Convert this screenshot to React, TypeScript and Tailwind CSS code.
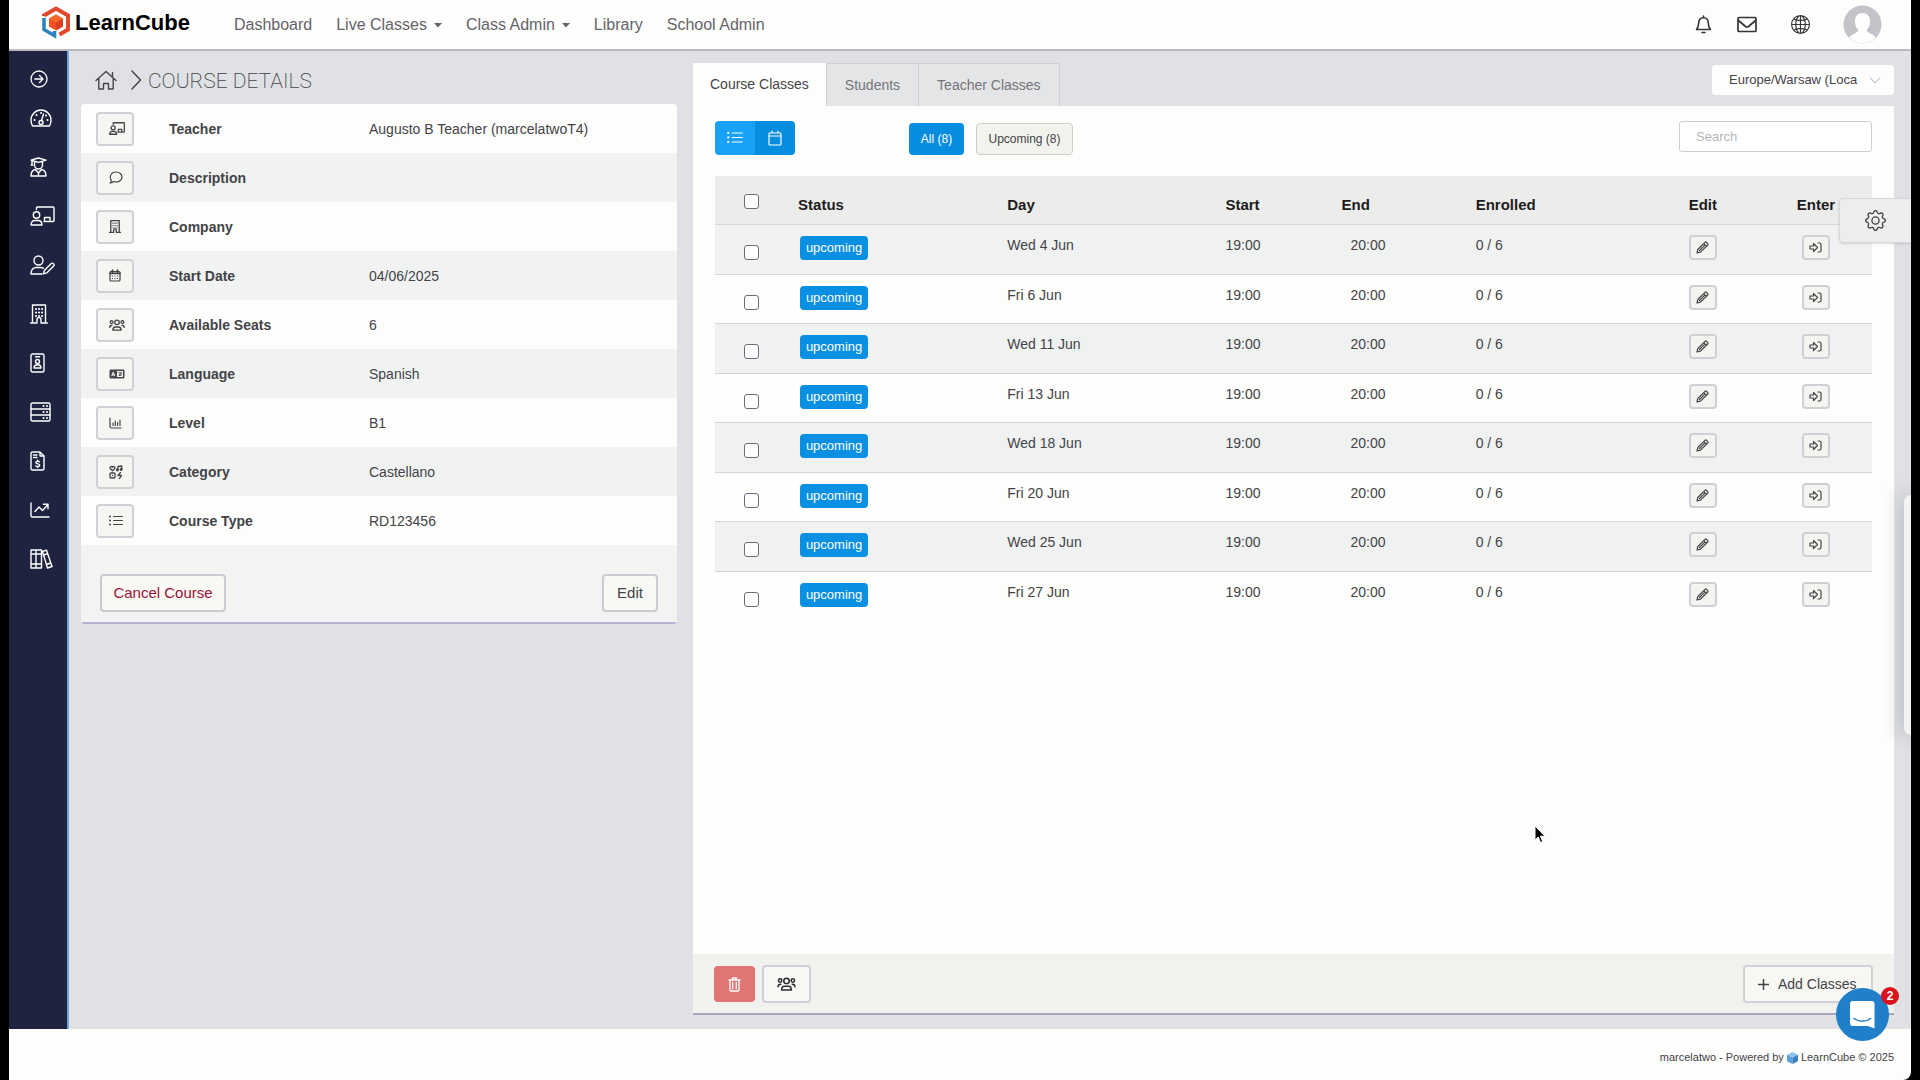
import React, { useState } from 'react';
import { FaLanguage } from 'react-icons/fa6';
import { BsGlobe2, BsListUl, BsGear } from 'react-icons/bs';

type IconProps = { w: number; h: number; box: string; children: React.ReactNode; stroke?: number };

const Icon: React.FC<IconProps> = ({ w, h, box, children, stroke = 1.4 }) => (
  <svg
    width={w}
    height={h}
    viewBox={box}
    fill="none"
    stroke="currentColor"
    strokeWidth={stroke}
    strokeLinecap="round"
    strokeLinejoin="round"
    aria-hidden="true"
  >
    {children}
  </svg>
);

// Shapes used both in the sidebar and in the small detail buttons
const boardShape = (
  <>
    <circle cx="6.5" cy="9" r="3.2" />
    <path d="M1 19c0-3 1.600-4.500 4-4.500h3c2.400 0 4 1.500 4 4.500z" />
    <path d="M6.500 3.500V2a1 1 0 0 1 1-1H23a1 1 0 0 1 1 1v12.500a1 1 0 0 1-1 1h-9M14.500 15v-3.500H20V15" />
  </>
);

const buildingShape = (
  <>
    <path d="M2.500 19V1h13v18M.700 19H7M11 19h6.300M7 19v-3.500a2 2 0 0 1 4 0V19" />
    <path strokeWidth="2" d="M6 5h.1M9 5h.1M12 5h.1M6 8.500h.1M9 8.500h.1M12 8.500h.1M6 12h.1M9 12h.1M12 12h.1" />
  </>
);

const TeamIcon: React.FC<{ w: number; h: number }> = ({ w, h }) => (
  <Icon w={w} h={h} box="0 0 20 15" stroke={1.6}>
    <circle cx="10" cy="4.200" r="2.900" />
    <circle cx="3.200" cy="3.700" r="1.800" />
    <circle cx="16.800" cy="3.700" r="1.800" />
    <path d="M4.800 14c0-2.600 1.200-4 3.200-4h4c2 0 3.200 1.400 3.200 4zM1 10.500c0-1.800.9-2.700 2.800-2.700M19 10.500c0-1.800-.9-2.700-2.800-2.700" />
  </Icon>
);

const sideItems = [
  {
    label: 'Overview',
    icon: (
      <Icon w={22} h={20} box="0 0 22 20">
        <path d="M2.500 18C1.500 16.200 1 14.200 1 12a10 10 0 0 1 20 0c0 2.200-.5 4.200-1.500 6z" />
        <circle cx="11" cy="14.500" r="2" />
        <path d="M11.500 12.500 13.500 6" />
        <path strokeWidth="1.900" d="M11 5h.1M6.500 7h.1M4.500 12h.1M17.500 12h.1M16 7.500h.1" />
      </Icon>
    ),
  },
  {
    label: 'Students',
    icon: (
      <Icon w={17} h={20} box="0 0 17 20">
        <path d="M1 3.200 8.500 1 16 3.200 8.500 5.400zM2 3.600V8M1.200 8h1.600M4.500 4.500V8a4 4 0 0 0 8 0V4.500" />
        <path d="M5.500 12.500C2.500 13 1 15 1 19h15c0-4-1.500-6-4.500-6.500L8.500 16zM8.500 16v3" />
      </Icon>
    ),
  },
  { label: 'Teachers', icon: <Icon w={25} h={20} box="0 0 25 20">{boardShape}</Icon> },
  {
    label: 'Edit users',
    icon: (
      <Icon w={25} h={20} box="0 0 25 20">
        <circle cx="8.500" cy="5.500" r="4.500" />
        <path d="M12 19H1c0-4.500 2.300-6.500 5.500-6.500h4c1 0 2 .3 2.800.7M13.500 18.800l.8-3.300 7-7a1.400 1.400 0 0 1 2 0l.4.400a1.400 1.400 0 0 1 0 2l-7 7z" />
      </Icon>
    ),
  },
  { label: 'Companies', icon: <Icon w={18} h={20} box="0 0 18 20">{buildingShape}</Icon> },
  {
    label: 'Badges',
    icon: (
      <Icon w={15} h={20} box="0 0 15 20">
        <rect x="1" y="1" width="13" height="18" rx="1.500" />
        <circle cx="7.500" cy="8.500" r="2" />
        <path d="M5.500 3.800h4M4 15c0-2.300 1-3.200 3.500-3.200S11 12.700 11 15z" />
      </Icon>
    ),
  },
  {
    label: 'Resources',
    icon: (
      <Icon w={21} h={20} box="0 0 21 20">
        <rect x="1" y="1" width="19" height="18" rx="1.500" />
        <path d="M1 7h19M1 13h19" />
        <path strokeWidth="1.900" d="M13.500 4h.1M17 4h.1M13.500 10h.1M17 10h.1M13.500 16h.1M17 16h.1" />
      </Icon>
    ),
  },
  {
    label: 'Invoices',
    icon: (
      <Icon w={15} h={20} box="0 0 15 20">
        <path d="M2.500 1H10l4 4v12.500a1.500 1.500 0 0 1-1.500 1.500h-10A1.500 1.500 0 0 1 1 17.500v-15A1.500 1.500 0 0 1 2.500 1zM10 1v4h4M3.500 4h3.500M3.500 6.500h3.500" />
        <path d="M9.500 10.800c-.5-.7-3.600-1-3.600.8 0 1.700 3.800.8 3.800 2.600 0 1.700-3.300 1.500-3.900.7M7.700 9.200v1M7.700 15.500v1" />
      </Icon>
    ),
  },
  {
    label: 'Reports',
    icon: (
      <Icon w={20} h={20} box="0 0 20 20">
        <path d="M1 3v12.500A1.500 1.500 0 0 0 2.500 17H19M5 11.500l4-4.500 3.500 3.500L18 4.500M13.500 4.200H18v4.500" />
      </Icon>
    ),
  },
  {
    label: 'Library',
    icon: (
      <Icon w={23} h={20} box="0 0 23 20">
        <path d="M1 1h5v18H1zM6 1h5.500v18H6zM1 5h10.500M1 15h10.500M12.500 2.500l4-1.300L22 17.500 17.500 19zM13.500 6l4.300-1.400M16.300 15.500l4.500-1.500" />
      </Icon>
    ),
  },
];

const details = [
  { label: 'Teacher', value: 'Augusto B Teacher (marcelatwoT4)', icon: <Icon w={16} h={13} box="0 0 25 20" stroke={2}>{boardShape}</Icon> },
  {
    label: 'Description',
    value: '',
    icon: (
      <Icon w={14} h={13} box="0 0 14 13" stroke={1.200}>
        <path d="M1 12c.9-.8 1.300-1.600 1.300-2.600C.300 6.500 1.200 1 7.200 1 10.500 1 13 3.200 13 6s-2.500 5-5.800 5c-1 0-1.900-.2-2.700-.5C3.500 11.400 2.500 12 1 12z" />
      </Icon>
    ),
  },
  { label: 'Company', value: '', icon: <Icon w={12} h={13} box="0 0 18 20" stroke={2}>{buildingShape}</Icon> },
  {
    label: 'Start Date',
    value: '04/06/2025',
    icon: (
      <Icon w={12} h={13} box="0 0 12 13" stroke={1.200}>
        <rect x="1" y="2.500" width="10" height="9.500" rx="1" />
        <path d="M1 4.300h10M3.500 1v2M8.500 1v2" strokeWidth="1.700" />
        <path d="M3.500 7h.1M6 7h.1M8.500 7h.1M3.500 9.500h.1M6 9.500h.1M8.500 9.500h.1" />
      </Icon>
    ),
  },
  { label: 'Available Seats', value: '6', icon: <TeamIcon w={16} h={12} /> },
  { label: 'Language', value: 'Spanish', icon: <FaLanguage className="h-3 w-4" /> },
  {
    label: 'Level',
    value: 'B1',
    icon: (
      <Icon w={13} h={12} box="0 0 13 12" stroke={1.200}>
        <path d="M1 1v8.500A1.500 1.500 0 0 0 2.500 11H12M4 6v2.500M6.300 4v4.500M8.600 5.500v3M11 3v5.500" />
      </Icon>
    ),
  },
  {
    label: 'Category',
    value: 'Castellano',
    icon: (
      <Icon w={14} h={14} box="0 0 14 14" stroke={1.300}>
        <path d="M3.500 5.800 1.200 3.500C.500 2 2.500.700 3.500 2.200 4.500.700 6.500 2 5.800 3.500z" />
        <path d="M9 5V1.500L12.800 1v3.500" />
        <circle cx="8.300" cy="5" r=".8" />
        <circle cx="12.100" cy="4.500" r=".8" />
        <rect x="1" y="8" width="5" height="5" rx="1" />
        <path d="M3.500 10.500h.1M11.500 7.500 9 10.500h3.500l-2 3" />
      </Icon>
    ),
  },
  { label: 'Course Type', value: 'RD123456', icon: <BsListUl className="h-4 w-4 -ml-px" /> },
];

const classes = [
  'Wed 4 Jun', 'Fri 6 Jun', 'Wed 11 Jun', 'Fri 13 Jun', 'Wed 18 Jun', 'Fri 20 Jun', 'Wed 25 Jun', 'Fri 27 Jun',
];

const Caret = () => (
  <svg width="8" height="5" viewBox="0 0 8 5" className="ml-[7px] mt-px" aria-hidden="true">
    <path d="M0 0h8L4 4.500z" fill="currentColor" />
  </svg>
);

const TopBar: React.FC = () => (
  <header className="flex h-[51px] items-center border-b-2 border-[#b9b9be] bg-[#fdfdfc] pl-8 pr-[29px]">
    <a href="#home" className="flex items-center gap-1 -mt-1">
      <svg width="30" height="33" viewBox="0 0 30 33" aria-hidden="true">
        <path d="M3 10V9.500l12-7 12 7v14L18.500 28.500" fill="none" stroke="#e2492c" strokeWidth="4" />
        <path d="M3 12v11.500l10.500 6.200V25" fill="none" stroke="#2d83bd" strokeWidth="3.600" />
        <path d="m15 8.500 7 4v8l-7 4-7-4v-8z" fill="#f0531f" />
        <path d="m15 16.500 7-4v8l-7 4z" fill="#d93f22" />
        <path d="m8 12.500 7-4 7 4-7 4z" fill="#f5692a" />
      </svg>
      <span className="text-[22px] font-bold leading-8 text-black">LearnCube</span>
    </a>
    <nav className="ml-11 flex items-center gap-6 text-base text-[#64646a]">
      <a href="#dashboard">Dashboard</a>
      <a href="#live" className="flex items-center">Live Classes<Caret /></a>
      <a href="#admin" className="flex items-center">Class Admin<Caret /></a>
      <a href="#library">Library</a>
      <a href="#school">School Admin</a>
    </nav>
    <div className="ml-auto flex items-center text-[#35353a]">
      <button type="button" aria-label="Notifications">
        <Icon w={17} h={19} box="0 0 17 19" stroke={1.600}>
          <path d="M8.500 1v1.500M1.500 14.500h14c-1.700-2-2.200-3.600-2.200-6.500 0-3.200-2-5.300-4.800-5.300S3.700 4.800 3.700 8c0 2.900-.5 4.500-2.200 6.500zM7 17.500h3" />
        </Icon>
      </button>
      <button type="button" aria-label="Messages" className="ml-[25px]">
        <Icon w={20} h={17} box="0 0 20 17" stroke={1.700}>
          <rect x="1" y="1.500" width="18" height="14" rx="1" />
          <path d="m1.500 4.500 7 6a2.200 2.200 0 0 0 3 0l7-6" />
        </Icon>
      </button>
      <button type="button" aria-label="Site language" className="ml-[34px]">
        <BsGlobe2 className="h-[19px] w-[19px]" />
      </button>
      <button type="button" aria-label="Profile" className="ml-[33px]">
        <svg width="39" height="39" viewBox="0 0 39 39" aria-hidden="true">
          <circle cx="19.500" cy="19.500" r="19" fill="#c3c3ca" />
          <path d="M19.500 8c5 0 7.500 3.500 7.500 8.500 0 4-1.500 7-3.500 8.500 1 3 6 3.500 9.500 7.500a19 19 0 0 1-27 0c3.500-4 8.500-4.500 9.500-7.500-2-1.500-3.500-4.500-3.500-8.500C12 11.500 14.500 8 19.500 8z" fill="#fff" />
        </svg>
      </button>
    </div>
  </header>
);

const SideBar: React.FC = () => (
  <aside className="flex w-[60px] shrink-0 flex-col border-r-2 border-[#6ea6dc] bg-[#1e2440] pl-[21px] pt-[14px] text-white">
    <button type="button" aria-label="Expand menu" className="flex h-7 items-center">
      <Icon w={18} h={18} box="0 0 18 18" stroke={1.300}>
        <circle cx="9" cy="9" r="8" />
        <path d="M4.800 9h8M9.500 5.500 13 9l-3.500 3.500" />
      </Icon>
    </button>
    {sideItems.map((item) => (
      <a key={item.label} href="#section" aria-label={item.label} className="flex h-[49px] items-center">
        {item.icon}
      </a>
    ))}
  </aside>
);

const CourseDetails: React.FC = () => (
  <section>
    <div className="flex h-[53px] items-center pl-[14px] pt-1 text-[#45454a]">
      <a href="#home" aria-label="Home">
        <Icon w={22} h={20} box="0 0 22 20" stroke={1.400}>
          <path d="m1 10.500 10-9 10 9M3.800 8.500V19h4.700v-5.500h5V19h4.700V8.500M17.500 2.500V7" />
        </Icon>
      </a>
      <span className="ml-[14px]">
        <Icon w={11} h={20} box="0 0 11 20" stroke={1.500}><path d="m1 1 8.500 9L1 19" /></Icon>
      </span>
      <h1 className="ml-[6px] pt-[2px] font-['Roboto',sans-serif] text-[21px] font-extralight leading-7">COURSE DETAILS</h1>
    </div>
    <div className="rounded-sm border-b-2 border-[#b4b4d4] bg-[#fdfdfc]">
      <dl>
        {details.map((row) => (
          <div key={row.label} className="flex h-[49px] items-center pl-[15px] even:bg-[#f1f3f3]">
            <span className="flex h-[34px] w-[38px] items-center rounded-sm border-2 border-[#d0d0d6] bg-[#f5f5f2] pl-[11px]">
              {row.icon}
            </span>
            <dt className="ml-[35px] w-[200px] pt-[2px] font-bold">{row.label}</dt>
            <dd className="pt-[2px]">{row.value}</dd>
          </div>
        ))}
      </dl>
      <div className="flex items-center justify-between bg-[#f3f3f1] px-[19px] pb-[10px] pt-[29px] text-[15px]">
        <button type="button" className="h-[38px] w-[126px] rounded-sm border-2 border-[#cacad2] bg-[#f8f8f5] text-[#9c1238]">Cancel Course</button>
        <button type="button" className="h-[38px] w-14 rounded-sm border-2 border-[#cacad2] bg-[#f8f8f5]">Edit</button>
      </div>
    </div>
  </section>
);

const rowButton = 'inline-flex h-[25px] w-7 items-center justify-center rounded-sm border-2 border-[#d0d0d4] bg-[#f4f4f0]';

const ClassTable: React.FC = () => (
  <table className="mt-[21px] w-full table-fixed text-left">
    <colgroup>
      <col className="w-[73px]" />
      <col className="w-[209px]" />
      <col className="w-[218px]" />
      <col className="w-[116px]" />
      <col className="w-[134px]" />
      <col className="w-[180px]" />
      <col className="w-[114px]" />
      <col className="w-[112px]" />
    </colgroup>
    <thead>
      <tr className="h-12 border-b border-[#d6d6dc] bg-[#ececeb] text-[15px] text-[#1c1c20]">
        <th className="pl-[29px] pt-1"><input type="checkbox" aria-label="Select all" className="block h-[15px] w-[15px] appearance-none rounded-[3px] border border-[#6c6c78] bg-white" /></th>
        <th className="pl-[10px] pt-[10px]">Status</th>
        <th className="pl-[10px] pt-[10px]">Day</th>
        <th className="pl-[10px] pt-[10px]">Start</th>
        <th className="pl-[10px] pt-[10px]">End</th>
        <th className="pl-[10px] pt-[10px]">Enrolled</th>
        <th className="pt-[10px] text-center">Edit</th>
        <th className="pt-[10px] text-center">Enter</th>
      </tr>
    </thead>
    <tbody>
      {classes.map((day) => (
        <tr key={day} className="h-[49px] border-b border-[#d4d4dc] align-top leading-5 last:border-0 odd:h-[50px] odd:bg-[#f0f2f2]">
          <td className="pl-[29px] pt-5"><input type="checkbox" aria-label={`Select ${day}`} className="block h-[15px] w-[15px] appearance-none rounded-[3px] border border-[#6c6c78] bg-white" /></td>
          <td className="pl-3 pt-[11px]"><span className="block h-6 w-[68px] rounded-sm bg-[#0a90e2] text-center text-[13px] leading-6 text-white">upcoming</span></td>
          <td className="pl-[10px] pt-[10px]">{day}</td>
          <td className="pl-[10px] pt-[10px]">19:00</td>
          <td className="pl-[19px] pt-[10px]">20:00</td>
          <td className="pl-[10px] pt-[10px]">0 / 6</td>
          <td className="pt-[10px] text-center">
            <button type="button" aria-label={`Edit ${day}`} className={rowButton}>
              <Icon w={13} h={13} box="0 0 13 13" stroke={1.200}>
                <path d="m1 12 .8-3.500L9 1.300a1 1 0 0 1 1.400 0l1.300 1.300a1 1 0 0 1 0 1.400l-7.200 7.200zM7.800 2.600l2.600 2.600M3.500 9.500l4.800-4.800" />
              </Icon>
            </button>
          </td>
          <td className="pt-[10px] text-center">
            <button type="button" aria-label={`Enter ${day}`} className={rowButton}>
              <Icon w={13} h={11} box="0 0 13 11" stroke={1.200}>
                <path d="M1 4h3.500V1.500l4 4-4 4V7H1zM9 1h1.500A1.500 1.500 0 0 1 12 2.500v6a1.500 1.500 0 0 1-1.500 1.500H9" />
              </Icon>
            </button>
          </td>
        </tr>
      ))}
    </tbody>
  </table>
);

const CoursePanel: React.FC = () => {
  const [search, setSearch] = useState('');

  return (
    <section className="flex flex-col pt-3">
      <div className="flex items-start justify-between">
        <div className="flex h-[43px] text-[14px] text-[#74747a]">
          <button type="button" className="bg-[#fdfdfc] px-[17px] text-[#45454a]">Course Classes</button>
          <button type="button" className="border border-b-0 border-[#cfcfd6] bg-[#e4e5e6] px-[18px]">Students</button>
          <button type="button" className="border border-b-0 border-l-0 border-[#cfcfd6] bg-[#e4e5e6] px-[18px]">Teacher Classes</button>
        </div>
        <div className="relative mt-[2px]">
          <select aria-label="Time zone" className="block h-[30px] w-[182px] appearance-none rounded-sm bg-[#fdfdfc] pl-[17px] pr-7 text-[13px]">
            <option>Europe/Warsaw (Loca</option>
          </select>
          <svg width="12" height="7" viewBox="0 0 12 7" className="pointer-events-none absolute right-[13px] top-3" aria-hidden="true">
            <path d="m1 .5 5 5.500 5-5.500" fill="none" stroke="#b0b0b8" />
          </svg>
        </div>
      </div>
      <div className="flex flex-1 flex-col border-b-2 border-[#a6a6bc] bg-[#fdfdfc]">
        <div className="flex-1 px-[22px] pt-[15px]">
          <div className="flex items-start">
            <div className="flex h-[34px] overflow-hidden rounded-sm text-white">
              <button type="button" aria-label="List view" className="flex w-10 items-center justify-center bg-[#17a2f7]"><BsListUl className="h-[18px] w-[18px]" /></button>
              <button type="button" aria-label="Calendar view" className="flex w-10 items-center justify-center bg-[#078de0]">
                <Icon w={14} h={16} box="0 0 14 16" stroke={1.200}>
                  <path d="M2 3h10a1 1 0 0 1 1 1v10a1 1 0 0 1-1 1H2a1 1 0 0 1-1-1V4a1 1 0 0 1 1-1zM1 6h12M4 1v2M10 1v2" />
                </Icon>
              </button>
            </div>
            <button type="button" className="ml-[114px] mt-[2px] h-8 w-[55px] rounded-sm bg-[#078de0] text-[12px] text-white">All (8)</button>
            <button type="button" className="ml-3 mt-[2px] h-8 w-[97px] rounded-sm border border-[#cdcdca] bg-[#f3f3ee] text-[12px]">Upcoming (8)</button>
            <input
              type="text"
              aria-label="Search"
              placeholder="Search"
              value={search}
              onChange={(e) => setSearch(e.target.value)}
              className="ml-auto h-[31px] w-[193px] rounded-[3px] border border-[#cfcfcf] bg-white px-4 text-[13px] placeholder:text-[#b4b4ba]"
            />
          </div>
          <ClassTable />
        </div>
        <div className="flex items-center bg-[#f1f1ee] px-[21px] pb-[10px] pt-[11px]">
          <button type="button" aria-label="Delete classes" className="flex h-9 w-[41px] items-center justify-center rounded-sm bg-[#df7673] text-white">
            <Icon w={13} h={15} box="0 0 13 15" stroke={1.300}>
              <path d="M1 3h11M4 3l.8-2h3.400L9 3M2 3v10a1 1 0 0 0 1 1h7a1 1 0 0 0 1-1V3M4.700 5.500v6M8.300 5.500v6" />
            </Icon>
          </button>
          <button type="button" aria-label="Assign students" className="ml-[7px] flex h-[38px] w-[49px] items-center justify-center rounded-sm border-2 border-[#d0d0d8] bg-[#f7f7f3] text-[#2c2c30]">
            <TeamIcon w={19} h={14} />
          </button>
          <button type="button" className="ml-auto flex h-[38px] w-[130px] items-center rounded-sm border-2 border-[#d0d0d6] bg-[#f7f7f3] pl-[13px] text-[14px]">
            <svg width="11" height="11" viewBox="0 0 11 11" className="mr-[9px]" aria-hidden="true"><path d="M5.500 0v11M0 5.500h11" stroke="currentColor" strokeWidth="1.500" /></svg>
            Add Classes
          </button>
        </div>
      </div>
    </section>
  );
};

const App: React.FC = () => (
  <div className="min-h-screen bg-black px-[9px] font-['Liberation_Sans',Arial,sans-serif] text-[14px] text-[#434348]">
    <div className="relative flex min-h-screen flex-col overflow-hidden rounded-br-lg bg-[#fdfdfc]">
      <TopBar />
      <div className="flex flex-1">
        <SideBar />
        <main className="grid flex-1 grid-cols-[596fr_1201fr] gap-4 bg-[#dfe1e4] pb-[14px] pl-3 pr-[17px]">
          <CourseDetails />
          <CoursePanel />
        </main>
      </div>
      <footer className="flex h-[51px] items-center justify-end gap-[3px] pr-[17px] pt-[6px] text-[11px]">
        <span>marcelatwo - Powered by</span>
        <svg width="11" height="12" viewBox="0 0 11 12" aria-hidden="true">
          <path d="M5.500 0 11 2.800 5.500 5.600 0 2.800z" fill="#8fc4ee" />
          <path d="M0 2.800 5.500 5.600V12L0 9.200z" fill="#5b9fd8" />
          <path d="M11 2.800 5.500 5.600V12L11 9.200z" fill="#3b7fbe" />
        </svg>
        <span>LearnCube © 2025</span>
      </footer>

      {/* Settings tab on the page edge */}
      <button type="button" aria-label="Settings" className="absolute right-0 top-[198px] flex h-[45px] w-[72px] items-center rounded-l-sm border border-r-0 border-[#d6d6de] bg-[#ededec] pl-[25px] shadow-sm">
        <BsGear className="h-[21px] w-[21px]" />
      </button>
      {/* Edge of the closed drawer */}
      <div className="absolute right-0 top-[495px] h-[240px] w-[7px] rounded-l-lg bg-[#f3f4f2] shadow-[0_0_20px_rgba(40,40,90,0.450)]" />

      <button type="button" aria-label="Open chat" className="absolute bottom-[39px] right-[22px] flex h-[53px] w-[53px] items-center justify-center rounded-full bg-[#1f7fc9]">
        <svg width="25" height="28" viewBox="0 0 25 28" aria-hidden="true">
          <path d="M3 0h18.500a3 3 0 0 1 3 3v24.500L18 25H3a3 3 0 0 1-3-3V3a3 3 0 0 1 3-3z" fill="#fff" />
          <path d="M4 17.500c4.500 3.600 12 3.600 16.500 0" fill="none" stroke="#1f7fc9" strokeWidth="1.600" strokeLinecap="round" />
        </svg>
        <span className="absolute -right-[10px] -top-px h-[18px] w-[18px] rounded-full bg-[#d8141f] text-center text-[12px] font-bold leading-[18px] text-white">2</span>
      </button>

      <svg width="12" height="19" viewBox="0 0 12 19" className="pointer-events-none absolute right-[365px] top-[825px]" aria-hidden="true">
        <path d="M1 1v14l3.200-3 2.300 5.500 2.200-1L6.400 11.200H11z" fill="#000" stroke="#fff" strokeWidth="1" />
      </svg>
    </div>
  </div>
);

export default App;
